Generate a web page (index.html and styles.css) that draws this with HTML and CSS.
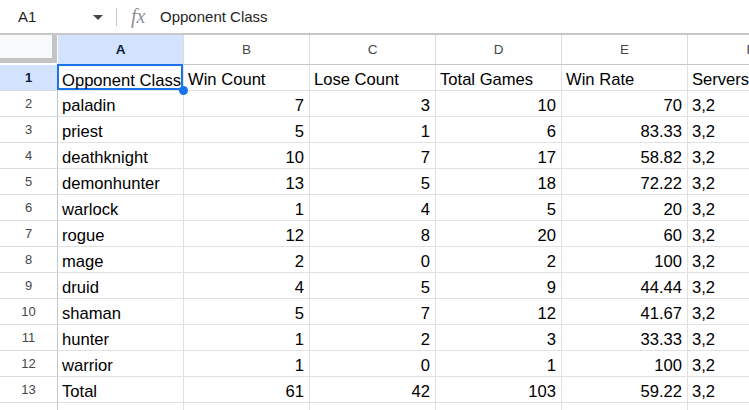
FILE: index.html
```html
<!DOCTYPE html>
<html>
<head>
<meta charset="utf-8">
<link rel="stylesheet" href="styles.css">
</head>
<body>
<div class="toolbar">
  <div class="namebox">
    <span class="ref">A1</span>
    <svg class="caret" width="10" height="5" viewBox="0 0 10 5"><path d="M0 0H10L5 5Z" fill="#444746"/></svg>
  </div>
  <div class="sep"></div>
  <span class="fx">fx</span>
  <span class="formula">Opponent Class</span>
</div>
<div class="grid">
  <div class="corner"></div>
  <div class="colhead sel">A</div>
  <div class="colhead">B</div>
  <div class="colhead">C</div>
  <div class="colhead">D</div>
  <div class="colhead">E</div>
  <div class="colhead">F</div>

  <div class="rowhead sel">1</div>
  <div class="cell active">Opponent Class<span class="handle"></span></div>
  <div class="cell">Win Count</div>
  <div class="cell">Lose Count</div>
  <div class="cell">Total Games</div>
  <div class="cell">Win Rate</div>
  <div class="cell">Servers</div>

  <div class="rowhead">2</div><div class="cell">paladin</div><div class="cell num">7</div><div class="cell num">3</div><div class="cell num">10</div><div class="cell num">70</div><div class="cell">3,2</div>
  <div class="rowhead">3</div><div class="cell">priest</div><div class="cell num">5</div><div class="cell num">1</div><div class="cell num">6</div><div class="cell num">83.33</div><div class="cell">3,2</div>
  <div class="rowhead">4</div><div class="cell">deathknight</div><div class="cell num">10</div><div class="cell num">7</div><div class="cell num">17</div><div class="cell num">58.82</div><div class="cell">3,2</div>
  <div class="rowhead">5</div><div class="cell">demonhunter</div><div class="cell num">13</div><div class="cell num">5</div><div class="cell num">18</div><div class="cell num">72.22</div><div class="cell">3,2</div>
  <div class="rowhead">6</div><div class="cell">warlock</div><div class="cell num">1</div><div class="cell num">4</div><div class="cell num">5</div><div class="cell num">20</div><div class="cell">3,2</div>
  <div class="rowhead">7</div><div class="cell">rogue</div><div class="cell num">12</div><div class="cell num">8</div><div class="cell num">20</div><div class="cell num">60</div><div class="cell">3,2</div>
  <div class="rowhead">8</div><div class="cell">mage</div><div class="cell num">2</div><div class="cell num">0</div><div class="cell num">2</div><div class="cell num">100</div><div class="cell">3,2</div>
  <div class="rowhead">9</div><div class="cell">druid</div><div class="cell num">4</div><div class="cell num">5</div><div class="cell num">9</div><div class="cell num">44.44</div><div class="cell">3,2</div>
  <div class="rowhead">10</div><div class="cell">shaman</div><div class="cell num">5</div><div class="cell num">7</div><div class="cell num">12</div><div class="cell num">41.67</div><div class="cell">3,2</div>
  <div class="rowhead">11</div><div class="cell">hunter</div><div class="cell num">1</div><div class="cell num">2</div><div class="cell num">3</div><div class="cell num">33.33</div><div class="cell">3,2</div>
  <div class="rowhead">12</div><div class="cell">warrior</div><div class="cell num">1</div><div class="cell num">0</div><div class="cell num">1</div><div class="cell num">100</div><div class="cell">3,2</div>
  <div class="rowhead">13</div><div class="cell">Total</div><div class="cell num">61</div><div class="cell num">42</div><div class="cell num">103</div><div class="cell num">59.22</div><div class="cell">3,2</div>
  <div class="rowhead"></div><div class="cell"></div><div class="cell"></div><div class="cell"></div><div class="cell"></div><div class="cell"></div><div class="cell"></div>
</div>
</body>
</html>
```
FILE: styles.css
```css
* { box-sizing: border-box; }
html, body { margin: 0; padding: 0; background: #fff; overflow: hidden; }
body { width: 749px; height: 410px; font-family: "Liberation Sans", Arial, sans-serif; color: #000; }

.toolbar {
  height: 35px;
  display: flex;
  align-items: center;
  border-bottom: 2px solid #c7c7c7;
}
.namebox {
  width: 116px;
  display: flex;
  align-items: center;
  padding-left: 18px;
}
.ref { font-size: 15px; color: #1f1f1f; width: 75px; }
.caret { margin-top: 2px; }
.sep { width: 1px; height: 18px; background: #c4c7c5; }
.fx {
  font-family: "Liberation Serif", serif;
  font-style: italic;
  font-size: 20px;
  color: #8d9196;
  margin-left: 14px;
  width: 29px;
}
.formula { font-size: 15px; color: #1f1f1f; }

.grid {
  display: grid;
  grid-template-columns: 58px repeat(6, 126px);
  grid-template-rows: 30px repeat(14, 26px);
}
.corner {
  background: #f8f9fa;
  border-right: 5px solid #c4c4c4;
  border-bottom: 5px solid #c4c4c4;
  margin-right: 1px;
  margin-bottom: 2px;
}
.colhead {
  display: flex;
  align-items: center;
  justify-content: center;
  font-size: 13.5px;
  color: #444746;
  border-right: 1px solid #dadce0;
  border-bottom: 1px solid #c4c7c5;
  background: #fff;
}
.colhead.sel { background: #d3e3fd; color: #0b1b3a; font-weight: bold; }
.rowhead {
  display: flex;
  align-items: center;
  justify-content: center;
  font-size: 13px;
  color: #444746;
  border-right: 1px solid #c4c7c5;
  border-bottom: 1px solid #dadce0;
  background: #fff;
}
.rowhead.sel { background: #d3e3fd; color: #0b1b3a; font-weight: bold; }
.cell {
  position: relative;
  font-size: 16.6px;
  line-height: 19px;
  padding: 0 4px 1px 4px;
  display: flex;
  align-items: flex-end;
  border-right: 1px solid #e1e1e1;
  border-bottom: 1px solid #e1e1e1;
  white-space: nowrap;
}
.cell.num { justify-content: flex-end; padding-right: 5px; }
.cell.active { box-shadow: inset 0 0 0 2px #1a73e8; margin: -1px 0 0 -1px; padding-left: 5px; padding-bottom: 0; }
.handle {
  position: absolute;
  right: -5px;
  bottom: -5px;
  width: 9px;
  height: 9px;
  border-radius: 50%;
  background: #1a73e8;
  z-index: 2;
}
```
